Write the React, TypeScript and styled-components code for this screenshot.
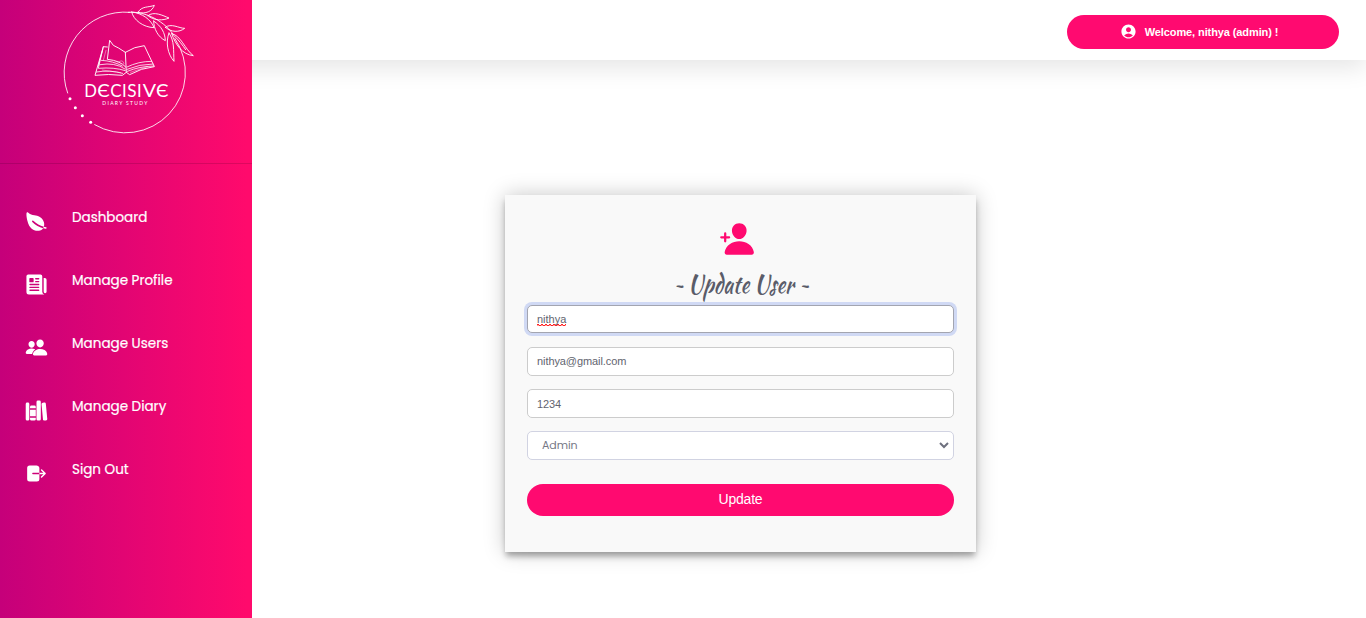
import React from "react";
import styled, { createGlobalStyle } from "styled-components";
import { IoLeaf, IoNewspaper, IoPeople, IoLibrary, IoLogOut, IoPersonAdd } from "react-icons/io5";
import { MdAccountCircle } from "react-icons/md";
import type { IconType } from "react-icons";

const pink = "#ff0a70";

const GlobalStyle = createGlobalStyle`
  * { box-sizing: border-box; }
  body { margin: 0; background: #fff; font-family: "Liberation Sans", Arial, sans-serif; overflow: hidden; }
`;

const Page = styled.div`
  display: flex;
  height: 618px;
`;

const Sidebar = styled.aside`
  position: relative;
  z-index: 1;
  width: 252px;
  flex: none;
  background: linear-gradient(90deg, #c5007a 0%, #ff0a6c 98%);
`;

const Brand = styled.div`
  height: 164px;
  padding-left: 50px;
  border-bottom: 1px solid rgba(0, 0, 0, 0.13);
`;

const Menu = styled.nav`
  padding-top: 29px;
`;

const MenuItem = styled.a`
  display: flex;
  height: 63px;
  padding-left: 25px;
  color: #fff;
  text-decoration: none;

  svg {
    width: 23px;
    height: 23px;
    margin-top: 17px;
    flex: none;
  }
`;

const MenuLabel = styled.span`
  margin: 15px 0 0 24px;
  font: 400 13.5px/20px Poppins, Inter, sans-serif;
  -webkit-text-stroke: 0.2px #fff;
  white-space: nowrap;
`;

const Main = styled.main`
  flex: 1;
  min-width: 0;
`;

const Header = styled.header`
  display: flex;
  justify-content: flex-end;
  height: 60px;
  margin-left: -40px;
  padding: 15px 27px 0 0;
  box-shadow: 0 8px 25px rgba(0, 0, 0, 0.1);
`;

const Welcome = styled.div`
  display: flex;
  align-items: center;
  justify-content: center;
  gap: 8px;
  width: 272px;
  height: 34px;
  padding-right: 8px;
  border-radius: 17px;
  background: ${pink};
  color: #fff;
  font-size: 11px;
  font-weight: 700;
  letter-spacing: -0.1px;

  svg {
    width: 17px;
    height: 17px;
    margin-bottom: 1px;
  }
`;

const Card = styled.form`
  display: flex;
  flex-direction: column;
  width: 471px;
  height: 357px;
  margin: 135px 0 0 253px;
  padding: 26px 22px 0;
  background: #f9f9f9;
  box-shadow: 0 5px 6px -1px rgba(0, 0, 0, 0.32), 0 0 20px rgba(0, 0, 0, 0.22);
`;

const CardIcon = styled(IoPersonAdd)`
  width: 36px;
  height: 36px;
  align-self: center;
  margin-right: 8px;
  color: ${pink};
`;

const Title = styled.h1`
  height: 48px;
  margin: 0;
  padding: 12px 0 0 1px;
  color: #5a5c69;
  font: 400 24px/32px "Kaushan Script", "Liberation Serif", serif;
  text-align: center;
  transform: scaleX(0.9);
`;

const Field = styled.input<{ $lift?: boolean }>`
  flex: none;
  width: 100%;
  height: 29px;
  margin-bottom: 13px;
  padding: 0 9px ${(p) => (p.$lift ? 1 : 0)}px;
  border: 1px solid #ccc;
  border-radius: 5px;
  background: #fff;
  color: #62646f;
  font: 11px "Liberation Sans", Arial, sans-serif;
  letter-spacing: -0.08px;
  outline: none;
`;

const ActiveField = styled.div`
  flex: none;
  display: flex;
  align-items: center;
  height: 28px;
  margin-bottom: 14px;
  padding: 0 9px;
  border: 1px solid #a3a5b0;
  border-radius: 5px;
  background: #fff;
  box-shadow: 0 0 0 3px #d0d9f4;
  color: #62646f;
  font-size: 11px;
`;

const Misspelled = styled.span`
  padding-bottom: 1px;
  margin-bottom: -1px;
  background:
    repeating-linear-gradient(90deg, #f22 0 2px, transparent 2px 4px) 0 11px / 100% 1px no-repeat,
    repeating-linear-gradient(90deg, #f99 0 2px, #f22 2px 4px) 0 12px / 100% 1px no-repeat;
`;

const Select = styled.div`
  flex: none;
  display: flex;
  align-items: center;
  justify-content: space-between;
  height: 29px;
  padding: 0 4px 0 14px;
  border: 1px solid #d1d3e2;
  border-radius: 5px;
  background: #fff;
  color: #757785;
  font: 11px Poppins, Inter, sans-serif;
  letter-spacing: -0.1px;
`;

const Submit = styled.button`
  flex: none;
  height: 32px;
  margin-top: 24px;
  padding: 0 0 2px;
  border: 0;
  border-radius: 16px;
  background: ${pink};
  color: #fff;
  font: 14px "Liberation Sans", Arial, sans-serif;
  letter-spacing: -0.2px;
`;

const Logo = () => (
  <svg width="160" height="145" viewBox="0 0 480 435" fill="none" stroke="#fff" strokeWidth="3" strokeLinecap="round" strokeLinejoin="round" display="block">
    <path d="M53 279 A181 181 0 0 1 240 37 M375 116 A181 181 0 0 1 134 374" strokeOpacity=".85" />
    <g fill="#fff" stroke="none">
      <circle cx="60" cy="296" r="4.5" />
      <circle cx="76" cy="323" r="4.5" />
      <circle cx="97" cy="347" r="4.5" />
      <circle cx="122" cy="367" r="4.5" />
    </g>
    <g strokeOpacity=".9">
      <path d="M235 37 C288 32 347 67 372 107 C386 120 399 137 407 149" />
      <path d="M245 36 C250 60 280 82 312 83 C304 60 277 39 245 36" />
      <path d="M264 37 C275 17 296 23 313 16 C307 34 287 43 264 37" />
      <path d="M294 47 C311 32 339 47 357 54 C340 62 311 63 294 47" />
      <path d="M311 63 C311 86 324 111 346 122 C345 99 335 79 311 63" />
      <path d="M346 82 C363 68 387 85 404 85 C387 98 364 97 346 82" />
      <path d="M357 99 C346 126 353 163 372 184 C370 151 374 123 357 99" />
      <path d="M365 101 C393 105 404 148 430 167 C397 164 376 133 365 101" />
    </g>
    <g strokeWidth="2.8">
      <path d="M226 157 Q254 139 283 137 L313 200 Q273 204 239 224 L229 217 L217 226 Q176 221 135 226 L160 140 L172 141" />
      <path d="M226 157 L229 217 M226 157 Q204 142 190 136 L179 121 L172 178 Q211 182 227 201" />
      <path d="M160 140 L145 205 Q193 201 226 212 M150 194 Q195 186 225 207 M154 181 Q190 183 217 198" strokeWidth="2.4" />
      <path d="M231 201 Q265 184 305 184 M231 208 Q269 192 309 192 M232 214 Q268 199 312 198 M139 216 Q180 209 218 220 M158 149 L145 198" strokeWidth="2.4" />
      <path d="M203 188 Q219 175 222 191 M168 151 L160 181 M157 210 L212 218 M241 217 L293 200" strokeWidth="1.8" strokeOpacity=".7" />
    </g>
    <g fill="#fff" stroke="none">
      <g fontFamily="Lato, sans-serif" fontSize="50">
        <text x="103" y="291" textLength="38" lengthAdjust="spacingAndGlyphs">D</text>
        <text x="142" y="291" textLength="38" lengthAdjust="spacingAndGlyphs">Є</text>
        <text x="181" y="291" textLength="34" lengthAdjust="spacingAndGlyphs">C</text>
        <text x="216" y="291">I</text>
        <text x="232" y="291" textLength="28" lengthAdjust="spacingAndGlyphs">S</text>
        <text x="261" y="291">I</text>
        <text x="278" y="291" textLength="40" lengthAdjust="spacingAndGlyphs">V</text>
        <text x="318" y="291" textLength="38" lengthAdjust="spacingAndGlyphs">Є</text>
      </g>
      <text x="157" y="314" fontFamily="Lato, sans-serif" fontSize="15" textLength="135" lengthAdjust="spacing">DIARY STUDY</text>
    </g>
  </svg>
);

const menu: { label: string; icon: IconType }[] = [
  { label: "Dashboard", icon: IoLeaf },
  { label: "Manage Profile", icon: IoNewspaper },
  { label: "Manage Users", icon: IoPeople },
  { label: "Manage Diary", icon: IoLibrary },
  { label: "Sign Out", icon: IoLogOut },
];

export default function App() {
  return (
    <Page>
      <GlobalStyle />
      <Sidebar>
        <Brand>
          <Logo />
        </Brand>
        <Menu>
          {menu.map(({ label, icon: Icon }) => (
            <MenuItem key={label}>
              <Icon />
              <MenuLabel>{label}</MenuLabel>
            </MenuItem>
          ))}
        </Menu>
      </Sidebar>
      <Main>
        <Header>
          <Welcome>
            <MdAccountCircle />
            <span>Welcome, nithya (admin) !</span>
          </Welcome>
        </Header>
        <Card>
          <CardIcon />
          <Title>~ Update User ~</Title>
          <ActiveField><Misspelled>nithya</Misspelled></ActiveField>
          <Field $lift defaultValue="nithya@gmail.com" />
          <Field defaultValue="1234" />
          <Select>
            Admin
            <svg width="10" height="8" viewBox="0 0 10 8" fill="none" stroke="#6e707e" strokeWidth="2">
              <path d="M1 1 L5 5 L9 1" />
            </svg>
          </Select>
          <Submit type="button">Update</Submit>
        </Card>
      </Main>
    </Page>
  );
}
